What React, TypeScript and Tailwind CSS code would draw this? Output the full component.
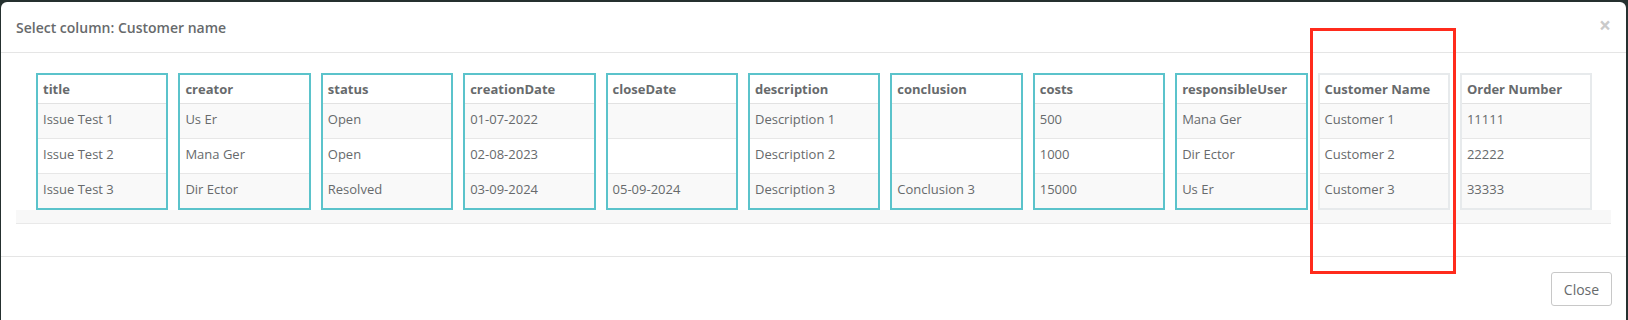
import React from "react";

type Column = {
  title: string;
  values: string[];
  selected: boolean;
};

const columns: Column[] = [
  { title: "title", values: ["Issue Test 1", "Issue Test 2", "Issue Test 3"], selected: true },
  { title: "creator", values: ["Us Er", "Mana Ger", "Dir Ector"], selected: true },
  { title: "status", values: ["Open", "Open", "Resolved"], selected: true },
  { title: "creationDate", values: ["01-07-2022", "02-08-2023", "03-09-2024"], selected: true },
  { title: "closeDate", values: ["", "", "05-09-2024"], selected: true },
  { title: "description", values: ["Description 1", "Description 2", "Description 3"], selected: true },
  { title: "conclusion", values: ["", "", "Conclusion 3"], selected: true },
  { title: "costs", values: ["500", "1000", "15000"], selected: true },
  { title: "responsibleUser", values: ["Mana Ger", "Dir Ector", "Us Er"], selected: true },
  { title: "Customer Name", values: ["Customer 1", "Customer 2", "Customer 3"], selected: false },
  { title: "Order Number", values: ["11111", "22222", "33333"], selected: false },
];

function ColumnTable({ column }: { column: Column }) {
  return (
    <div
      className={
        column.selected
          ? "w-[132.4px] shrink-0 border-2 border-[#5bc3cb]"
          : "w-[132.4px] shrink-0 border-2 border-[#e7eaec]"
      }
    >
      <div className="flex h-[29px] items-center border-b border-[#e2e2e2] bg-white px-[5px] pt-[2px] text-[13px] font-bold text-[#676a6c]">
        {column.title}
      </div>
      {column.values.map((value, i) => (
        <div
          key={i}
          className={
            (i % 2 === 0 ? "bg-[#f9f9f9] " : "bg-white ") +
            (i < column.values.length - 1 ? "h-[35px] border-b border-[#e7e7e7] " : "h-[34px] ") +
            "flex items-center px-[5px] pb-[2px] text-[13px] text-[#676a6c]"
          }
        >
          {value}
        </div>
      ))}
    </div>
  );
}

export default function App() {
  return (
    <div
      className="relative h-[320px] w-[1628px] overflow-hidden bg-[#25302f]"
      style={{ fontFamily: '"Open Sans", "Liberation Sans", sans-serif' }}
    >
      <div className="ml-[1px] mt-[2px] flex h-[330px] w-[1625px] flex-col rounded-[6px] bg-white">
        <div className="flex h-[51px] items-center justify-between border-b border-[#e5e5e5] px-[15px]">
          <h4 className="text-[14px] font-semibold text-[#676a6c]">Select column: Customer name</h4>
          <span className="mb-[4px] text-[21px] leading-none font-bold text-[#cacaca]">×</span>
        </div>

        <div className="px-[15px] pt-[20px] pb-[32px]">
          <div className="flex gap-[10px] px-[20px]">
            {columns.map((column) => (
              <ColumnTable key={column.title} column={column} />
            ))}
          </div>
          <div className="h-[14px] border-b border-[#e9e9e9] bg-[#f8f8f8]" />
        </div>

        <div className="flex justify-end border-t border-[#e5e5e5] px-[14px] pt-[15px]">
          <button className="h-[34px] w-[61px] rounded-[3px] border border-[#c8c8c8] bg-white text-[14px] text-[#676a6c]">
            Close
          </button>
        </div>
      </div>

      <div className="absolute top-[28px] left-[1310px] h-[246px] w-[146px] border-[3px] border-[#ff2b1c]" />
    </div>
  );
}
